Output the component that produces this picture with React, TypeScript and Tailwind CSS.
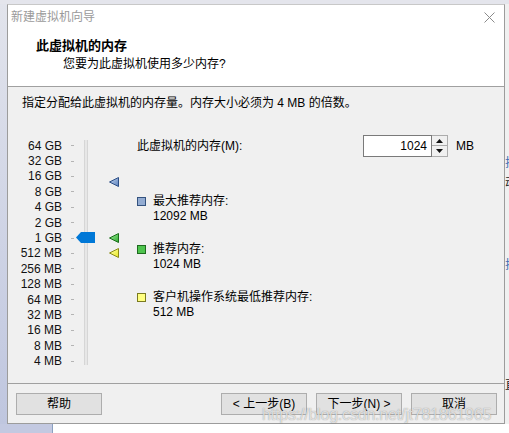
import React from "react";

const labels = [
  "64 GB",
  "32 GB",
  "16 GB",
  "8 GB",
  "4 GB",
  "2 GB",
  "1 GB",
  "512 MB",
  "256 MB",
  "128 MB",
  "64 MB",
  "32 MB",
  "16 MB",
  "8 MB",
  "4 MB",
];

interface MarkerProps {
  id: string;
  top: number;
  light: string;
  dark: string;
  stroke: string;
}

function Marker({ id, top, light, dark, stroke }: MarkerProps) {
  return (
    <svg
      width="10"
      height="10"
      viewBox="0 0 10 10"
      className="absolute left-[21px]"
      style={{ top }}
    >
      <defs>
        <linearGradient id={id} x1="0" y1="0" x2="1" y2="1">
          <stop offset="0" stopColor={light} />
          <stop offset="1" stopColor={dark} />
        </linearGradient>
      </defs>
      <polygon
        points="9.5,0.5 9.5,9.5 0.5,5"
        fill={`url(#${id})`}
        stroke={stroke}
        strokeWidth="1"
        strokeLinejoin="round"
      />
    </svg>
  );
}

function LegendItem({
  fill,
  border,
  title,
  value,
}: {
  fill: string;
  border: string;
  title: string;
  value: string;
}) {
  return (
    <div className="flex items-start">
      <div
        className="mt-[3px] h-[9px] w-[9px] border"
        style={{ background: fill, borderColor: border }}
      />
      <div className="ml-[7px] flex flex-col">
        <span className="h-[15px] leading-[15px]">{title}</span>
        <span className="h-[15px] leading-[15px]">{value}</span>
      </div>
    </div>
  );
}

function DialogButton({ children }: { children: React.ReactNode }) {
  return (
    <button className="flex h-[22px] w-[86px] items-center justify-center border border-[#adadad] bg-[#e1e1e1] text-[12px] text-black">
      {children}
    </button>
  );
}

export default function App() {
  return (
    <div className="relative flex h-[433px] w-[509px] flex-col overflow-hidden bg-[#e4e5ec] font-['Liberation_Sans','Noto_Sans_CJK_SC',sans-serif] text-[12px] text-black">
      <div className="h-[4px] shrink-0" />
      <div className="flex h-[420px] shrink-0">
        <div className="w-[7px] shrink-0 bg-gradient-to-b from-[#e2e4ec] to-[#bfc6df]" />

        {/* dialog */}
        <div className="flex w-[498px] shrink-0 flex-col border border-[#9c9c9c] border-t-[#c8c8c8] bg-[#f0f0f0]">
          <div className="flex h-[24px] items-center justify-between bg-white pl-[3px] pr-[9px]">
            <span className="text-[12px] text-[#9a9a9a]">新建虚拟机向导</span>
            <svg width="11" height="11" viewBox="0 0 11 11">
              <path d="M0.5 0.5 L10.5 10.5 M10.5 0.5 L0.5 10.5" stroke="#8a8a8a" strokeWidth="1" />
            </svg>
          </div>
          <div className="flex h-[58px] flex-col border-b border-[#a0a0a0] bg-white pl-[28px] pt-[8px]">
            <span className="h-[18px] text-[13px] font-bold leading-[18px]">此虚拟机的内存</span>
            <span className="mt-[1px] h-[16px] pl-[27px] leading-[16px]">您要为此虚拟机使用多少内存?</span>
          </div>

          {/* body */}
          <div className="flex h-[297px] flex-col border-b border-[#a0a0a0]">
            <div className="mt-[8px] h-[16px] pl-[14px] leading-[16px]">
              指定分配给此虚拟机的内存量。内存大小必须为 4 MB 的倍数。
            </div>

            <div className="mt-[24px] flex h-[236px]">
              <div className="flex w-[66px] shrink-0 flex-col pt-[3px]">
                {labels.map((l) => (
                  <div key={l} className="flex h-[15.4px] items-center justify-end">
                    <span className="font-['Liberation_Sans_Narrow','Liberation_Sans',sans-serif] text-[12px] leading-none text-[#111]">
                      {l}
                    </span>
                    <span className="ml-[9px] h-px w-[3px] bg-[#b4b4b4]" />
                  </div>
                ))}
              </div>

              <div className="relative ml-[10px] w-[4px] shrink-0">
                <div className="mt-[5px] h-[225px] w-[4px] border-x border-[#d6d6d6] bg-[#e7e7e7]" />
                <svg
                  width="19"
                  height="11"
                  viewBox="0 0 19 11"
                  className="absolute left-[-8px] top-[97px]"
                >
                  <polygon points="0,5.5 5,0 19,0 19,11 5,11" fill="#0078d7" />
                </svg>
              </div>

              <div className="relative w-[49px] shrink-0">
                <Marker id="mb" top={42} light="#c4d6f0" dark="#5a80bc" stroke="#2d4f86" />
                <Marker id="mg" top={98} light="#9ef09e" dark="#2ea82e" stroke="#1a6e1a" />
                <Marker id="my" top={113} light="#ffffb0" dark="#e8e820" stroke="#8a8a18" />
              </div>

              <div className="flex flex-1 flex-col">
                <div className="flex h-[22px] items-center">
                  <span className="w-[226px]">此虚拟机的内存(M):</span>
                  <div className="flex h-[22px]">
                    <div className="flex w-[69px] items-center justify-end border border-[#7a7a7a] bg-white pr-[4px]">
                      1024
                    </div>
                    <div className="flex w-[16px] flex-col border border-l-0 border-[#acacac] bg-[#f0f0f0]">
                      <div className="flex h-[10px] items-center justify-center border-b border-[#acacac]">
                        <svg width="7" height="4" viewBox="0 0 7 4">
                          <polygon points="0,4 7,4 3.5,0" fill="#111" />
                        </svg>
                      </div>
                      <div className="flex flex-1 items-center justify-center">
                        <svg width="7" height="4" viewBox="0 0 7 4">
                          <polygon points="0,0 7,0 3.5,4" fill="#111" />
                        </svg>
                      </div>
                    </div>
                  </div>
                  <span className="ml-[8px]">MB</span>
                </div>

                <div className="mt-[37px] flex flex-col gap-[18px]">
                  <LegendItem fill="#93acd2" border="#34537f" title="最大推荐内存:" value="12092 MB" />
                  <LegendItem fill="#4ec44e" border="#1f6a1f" title="推荐内存:" value="1024 MB" />
                  <LegendItem fill="#ffff80" border="#7a7a20" title="客户机操作系统最低推荐内存:" value="512 MB" />
                </div>
              </div>
            </div>
          </div>

          {/* footer */}
          <div className="flex flex-1 items-start pl-[8px] pr-[7px] pt-[9px]">
            <DialogButton>帮助</DialogButton>
            <div className="ml-auto flex gap-[9px]">
              <DialogButton>&lt; 上一步(B)</DialogButton>
              <DialogButton>下一步(N) &gt;</DialogButton>
              <DialogButton>取消</DialogButton>
            </div>
          </div>
        </div>

        {/* neighbouring window */}
        <div className="flex w-[4px] shrink-0 flex-col overflow-hidden bg-[#f0f0f0] text-[12px] leading-[14px]">
          <span className="mt-[152px] text-[#3c6cb4]">拉</span>
          <span className="mt-[6px] text-[#222]">动</span>
          <span className="mt-[68px] text-[#3c6cb4]">拉</span>
          <span className="mt-[106px] text-[#222]">直</span>
        </div>
      </div>

      <div className="flex h-[9px] shrink-0">
        <div className="w-[52px] bg-[#c3c9e1]" />
        <div className="flex-1 border-l border-[#8aa0c0] bg-white" />
      </div>

      <div className="pointer-events-none absolute left-[262px] top-[403px] text-[16px] tracking-[-0.2px] text-white/70 [text-shadow:0_0_1px_rgba(90,90,90,0.7)]">
        https://blog.csdn.net/jt781861965
      </div>
    </div>
  );
}
